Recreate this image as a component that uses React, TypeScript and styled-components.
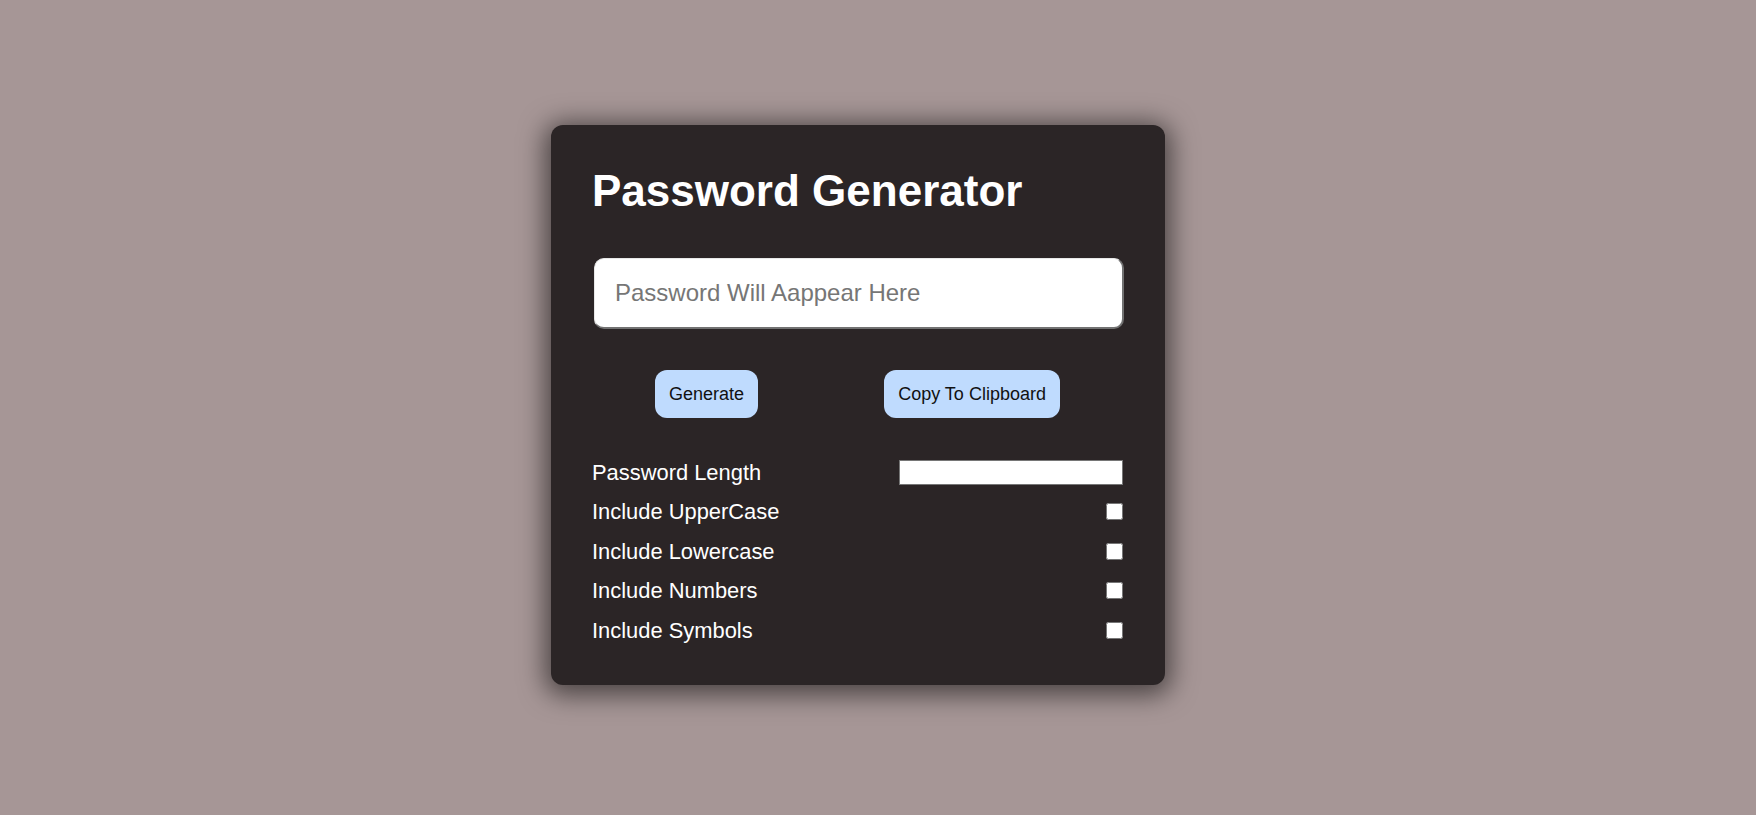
import React, { useState } from "react";
import styled, { createGlobalStyle } from "styled-components";

const GlobalStyle = createGlobalStyle`
  * { box-sizing: border-box; }
  html, body { margin: 0; padding: 0; }
  body {
    background: #a69696;
    font-family: "Liberation Sans", Arial, sans-serif;
  }
`;

const Page = styled.main`
  min-height: 100vh;
  display: flex;
  align-items: center;
  justify-content: center;
  padding: 0 40px 5px 0;
`;

const Card = styled.section`
  width: 614px;
  background: #2b2526;
  border-radius: 12px;
  padding: 41px 42px 42px 41px;
  box-shadow: 0 4px 26px 6px rgba(0, 0, 0, 0.55);
  display: flex;
  flex-direction: column;
  gap: 41.6px;
`;

const Title = styled.h1`
  margin: 0;
  color: #ffffff;
  font-size: 44px;
  font-weight: 700;
  line-height: normal;
`;

const Output = styled.input`
  width: 530px;
  margin-left: 2px;
  padding: 20px 20px;
  font-family: "Liberation Sans", Arial, sans-serif;
  font-size: 24px;
  line-height: normal;
  color: #222;
  background: #ffffff;
  border-style: solid;
  border-width: 1px 2px 2px 1px;
  border-color: #e8e8e8 #727272 #727272 #e8e8e8;
  border-radius: 10px;
  outline: none;
  &::placeholder { color: #767676; }
`;

const ButtonRow = styled.div`
  display: flex;
  justify-content: space-around;
  align-items: center;
`;

const ActionButton = styled.button`
  background: #bfdbfe;
  color: #111;
  border: none;
  border-radius: 12px;
  padding: 13.5px 14px;
  font-family: "Liberation Sans", Arial, sans-serif;
  font-size: 18px;
  line-height: normal;
  cursor: pointer;
`;

const Options = styled.div`
  display: flex;
  flex-direction: column;
  gap: 14.5px;
`;

const OptionRow = styled.label`
  display: flex;
  align-items: center;
  justify-content: space-between;
  height: 25px;
  color: #ffffff;
  font-size: 21.9px;
  line-height: 25px;
`;

const LengthInput = styled.input`
  width: 224px;
  height: 25px;
  margin: 0;
  background: #ffffff;
  border: 1px solid #767676;
  border-radius: 0;
  padding: 0 4px;
  font-family: "Liberation Sans", Arial, sans-serif;
  font-size: 16px;
  outline: none;
  appearance: textfield;
  &::-webkit-outer-spin-button,
  &::-webkit-inner-spin-button { -webkit-appearance: none; margin: 0; }
`;

const Check = styled.input`
  width: 17px;
  height: 17px;
  margin: 0;
`;

const options = [
  "Include UpperCase",
  "Include Lowercase",
  "Include Numbers",
  "Include Symbols",
];

export default function App() {
  const [pw, setPw] = useState("");
  return (
    <>
      <GlobalStyle />
      <Page>
        <Card>
          <Title>Password Generator</Title>
          <Output
            readOnly
            value={pw}
            placeholder="Password Will Aappear Here"
            onChange={(e) => setPw(e.target.value)}
          />
          <ButtonRow>
            <ActionButton>Generate</ActionButton>
            <ActionButton>Copy To Clipboard</ActionButton>
          </ButtonRow>
          <Options>
            <OptionRow>
              Password Length
              <LengthInput type="number" />
            </OptionRow>
            {options.map((o) => (
              <OptionRow key={o}>
                {o}
                <Check type="checkbox" />
              </OptionRow>
            ))}
          </Options>
        </Card>
      </Page>
    </>
  );
}
